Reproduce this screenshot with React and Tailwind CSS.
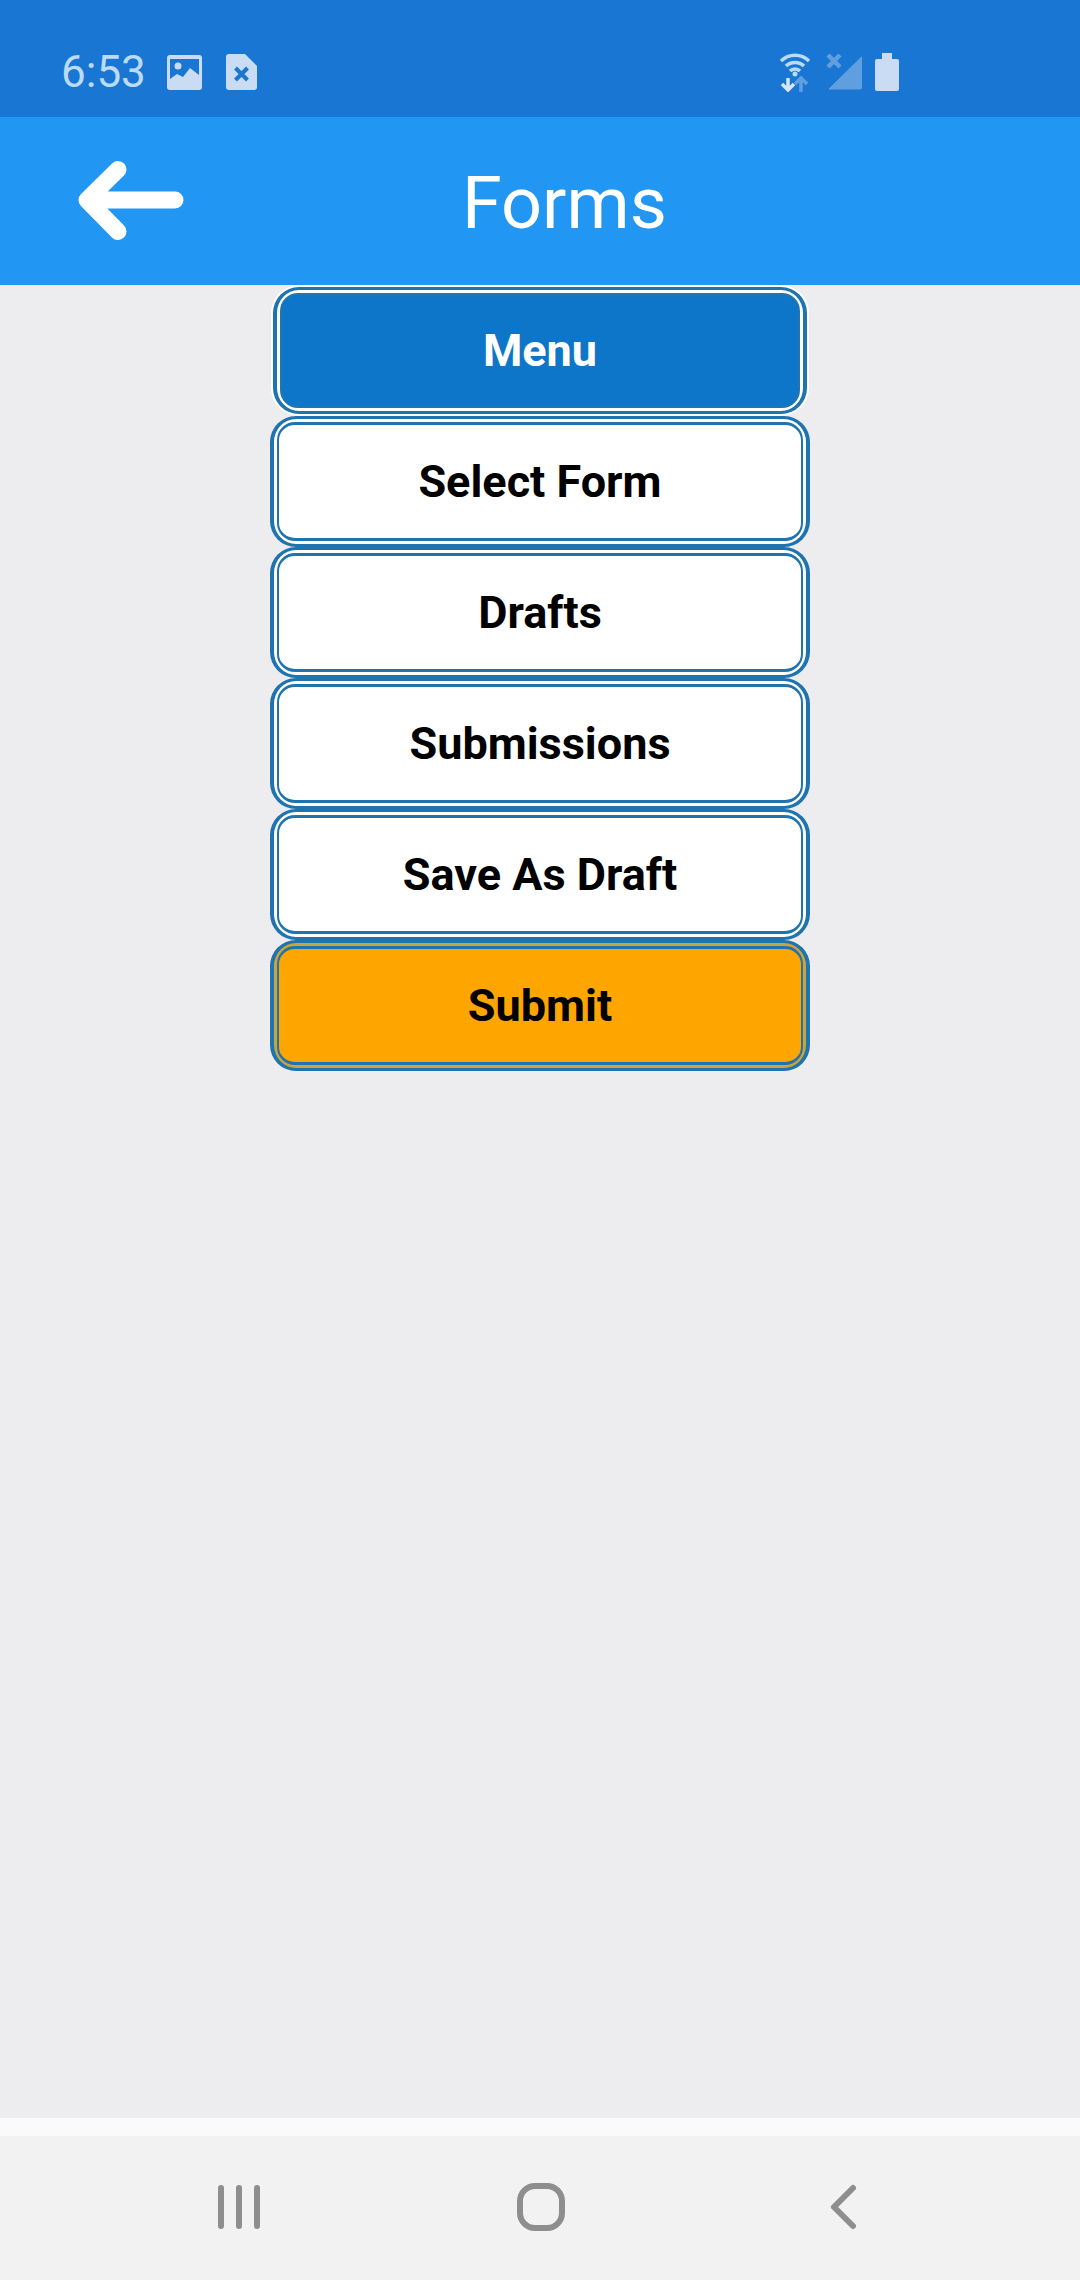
import React from 'react';

const labels = ['Select Form', 'Drafts', 'Submissions', 'Save As Draft'];

const MenuButton = ({ label, ring, fill }) => (
  <div className={`w-[540px] h-[131px] rounded-[26px] border-x-[4px] border-y-[3px] border-[#1f74b0] p-[3px] ${ring}`}>
    <div className={`h-full flex items-center justify-center rounded-[18px] border-x-[2px] border-y-[3px] border-[#1f74b0] ${fill} text-[45px] font-bold text-black`}>
      {label}
    </div>
  </div>
);

const App = () => (
  <div className="w-[1080px] h-[2280px] flex flex-col bg-[#ededef] font-['Roboto',sans-serif] overflow-hidden">
    <div className="h-[117px] shrink-0 bg-[#1976d2] flex items-center justify-between pl-[61px] pr-[181px] pt-[27px]">
      <div className="flex items-center">
        <span className="text-[44px] text-[#bbdaf6]">6:53</span>
        <svg className="ml-[21px] w-[35px] h-[35px]" viewBox="0 0 35 35">
          <rect width="35" height="35" rx="3" fill="#c9dcf4" />
          <path d="M3 4H32V20L23 13L16 22L10 19L3 24Z" fill="#1976d2" />
          <circle cx="11" cy="11" r="3.500" fill="#c9dcf4" />
        </svg>
        <svg className="ml-[24px] w-[31px] h-[36px]" viewBox="0 0 31 36">
          <path d="M3 0h16l12 12v21a3 3 0 0 1-3 3H3a3 3 0 0 1-3-3V3a3 3 0 0 1 3-3z" fill="#c9dcf4" />
          <path d="M9.500 14l12 12M21.500 14l-12 12" stroke="#1976d2" strokeWidth="4" />
        </svg>
      </div>
      <div className="flex items-center">
        <svg className="w-[32px] h-[40px]" viewBox="0 0 32 40">
          <path d="M2 9a20 20 0 0 1 28 0M7 14a13 13 0 0 1 18 0M11 19a7 7 0 0 1 10 0" fill="none" stroke="#bbdaf6" strokeWidth="3.500" />
          <circle cx="16" cy="22" r="2.500" fill="#bbdaf6" />
          <path d="M9 26v12M3 32l6 6 6-6" fill="none" stroke="#d5e6f8" strokeWidth="3.500" />
          <path d="M22 40V27M16 32l6-6 6 6" fill="none" stroke="#5f9fe0" strokeWidth="3.500" />
        </svg>
        <svg className="ml-[15px] w-[37px] h-[36px]" viewBox="0 0 37 36">
          <path d="M35.500 3v31a1 1 0 0 1-1 1H3z" fill="#5f9fe0" stroke="#5f9fe0" strokeLinejoin="round" />
          <path d="M2 1l12 12M14 1L2 13" stroke="#5f9fe0" strokeWidth="4.500" />
        </svg>
        <svg className="ml-[12px] w-[24px] h-[38px]" viewBox="0 0 24 38">
          <path d="M7 0h10v6h5a2 2 0 0 1 2 2v28a2 2 0 0 1-2 2H2a2 2 0 0 1-2-2V8a2 2 0 0 1 2-2h5z" fill="#c9dcf4" />
        </svg>
      </div>
    </div>

    <div className="h-[168px] shrink-0 bg-[#2196f3] flex items-center relative">
      <svg className="ml-[76px] w-[108px] h-[82px]" viewBox="0 0 108 82">
        <path d="M42 9.500L11 40L42 71.500M11 40H99" fill="none" stroke="white" strokeWidth="17" strokeLinecap="round" strokeLinejoin="round" />
      </svg>
      <span className="absolute left-[462px] mt-[6px] text-[72px] text-white leading-none">Forms</span>
    </div>

    <div className="flex-1 flex flex-col items-center">
      <div className="w-[538px] h-[131px] rounded-[28px] bg-white p-[2px]">
        <div className="h-full rounded-[26px] border-x-[4px] border-y-[3px] border-[#1f74b0] p-[3px] bg-white">
          <div className="h-full flex items-center justify-center rounded-[18px] border-[2px] border-[#2176ae] bg-[#0d76c8] text-[45px] font-bold text-white">
            Menu
          </div>
        </div>
      </div>
      {labels.map((label) => (
        <MenuButton key={label} label={label} ring="bg-white" fill="bg-white" />
      ))}
      <MenuButton label="Submit" ring="bg-[#c9a53c]" fill="bg-[#ffa500]" />
    </div>

    <div className="h-[18px] shrink-0 bg-[#fafafa]" />
    <div className="h-[144px] shrink-0 bg-[#f2f2f2] relative">
      <svg className="absolute left-[210px] top-[41px] w-[660px] h-[60px]" viewBox="0 0 660 60">
        <path d="M11 11v38M29 11v38M47 11v38" stroke="#8e8e8e" strokeWidth="6" strokeLinecap="round" />
        <rect x="310" y="9" width="42" height="42" rx="15" fill="none" stroke="#8e8e8e" strokeWidth="6" />
        <path d="M643 11L624 30L643 49" fill="none" stroke="#8e8e8e" strokeWidth="6" strokeLinecap="round" strokeLinejoin="round" />
      </svg>
    </div>
  </div>
);

export default App;
